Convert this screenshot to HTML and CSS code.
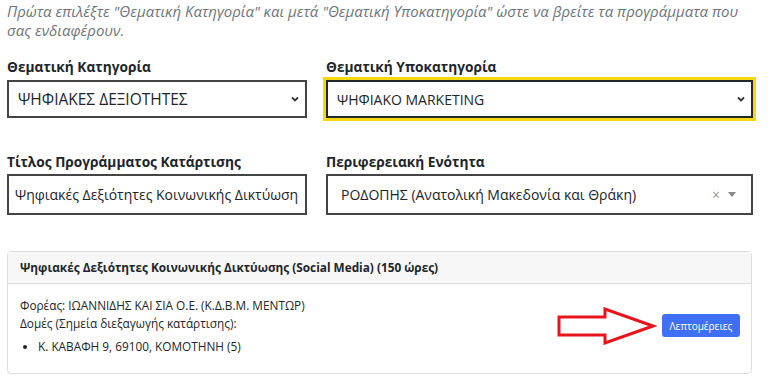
FILE: index.html
```html
<!DOCTYPE html>
<html lang="el">
<head>
  <meta charset="UTF-8">
  <title>Αναζήτηση Προγραμμάτων</title>
  <link rel="stylesheet" href="styles.css">
</head>
<body>

  <!-- Οδηγία -->
  <p class="odigia">Πρώτα επιλέξτε "Θεματική Κατηγορία" και μετά "Θεματική Υποκατηγορία" ώστε να βρείτε τα προγράμματα που σας ενδιαφέρουν.</p>

  <!-- Φίλτρα -->
  <div class="filtra">
    <div class="pedio">
      <label>Θεματική Κατηγορία</label>
      <div class="epilogi megali">
        <span>ΨΗΦΙΑΚΕΣ ΔΕΞΙΟΤΗΤΕΣ</span>
        <svg class="velaki" width="10" height="8" viewBox="0 0 10 8"><path d="M2 2.5 L5 5.5 L8 2.5" fill="none" stroke="#333" stroke-width="1.8"/></svg>
      </div>
    </div>
    <div class="pedio">
      <label>Θεματική Υποκατηγορία</label>
      <div class="epilogi energo">
        <span>ΨΗΦΙΑΚΟ MARKETING</span>
        <svg class="velaki" width="10" height="8" viewBox="0 0 10 8"><path d="M2 2.5 L5 5.5 L8 2.5" fill="none" stroke="#333" stroke-width="1.8"/></svg>
      </div>
    </div>
    <div class="pedio">
      <label>Τίτλος Προγράμματος Κατάρτισης</label>
      <div class="keimeno">
        <span>Ψηφιακές Δεξιότητες Κοινωνικής Δικτύωσης</span>
      </div>
    </div>
    <div class="pedio">
      <label>Περιφερειακή Ενότητα</label>
      <div class="keimeno perioxi">
        <span>ΡΟΔΟΠΗΣ (Ανατολική Μακεδονία και Θράκη)</span>
        <span class="katharismos">×</span>
        <span class="trigono"></span>
      </div>
    </div>
  </div>

  <!-- Αποτέλεσμα -->
  <div class="karta">
    <div class="karta-kefali">Ψηφιακές Δεξιότητες Κοινωνικής Δικτύωσης (Social Media) (150 ώρες)</div>
    <div class="karta-soma">
      <div class="stoixeia">
        <p>Φορέας: ΙΩΑΝΝΙΔΗΣ ΚΑΙ ΣΙΑ Ο.Ε. (Κ.Δ.Β.Μ. ΜΕΝΤΩΡ)</p>
        <p>Δομές (Σημεία διεξαγωγής κατάρτισης):</p>
        <ul>
          <li>Κ. ΚΑΒΑΦΗ 9, 69100, ΚΟΜΟΤΗΝΗ (5)</li>
        </ul>
      </div>
      <div class="energeies">
        <svg width="100" height="38" viewBox="0 0 100 38">
          <path d="M2 10 H48 V2 L96 19 L48 36 V28 H2 Z" fill="#fff" stroke="#e8161c" stroke-width="3"/>
        </svg>
        <button class="koumpi">Λεπτομέρειες</button>
      </div>
    </div>
  </div>

</body>
</html>
```

FILE: styles.css
```css
/* Σελίδα αναζήτησης */
body {
  font-family: "Open Sans", "Noto Sans", sans-serif;
  margin: 0;
  padding: 0 7px;
  color: #212529;
  background: #fff;
}

.odigia {
  margin: 2px 0 0;
  font-size: 15px;
  line-height: 19px;
  font-style: italic;
  color: #6c757d;
  padding-right: 20px;
}

.filtra {
  display: grid;
  grid-template-columns: 300px 427px;
  column-gap: 19px;
  row-gap: 34px;
  margin-top: 17px;
}

.pedio label {
  display: block;
  font-weight: 700;
  font-size: 13.7px;
  line-height: 20px;
  margin-bottom: 3px;
}

.epilogi,
.keimeno {
  display: flex;
  align-items: center;
  border: 2px solid #444;
  box-sizing: border-box;
  height: 38px;
  padding: 0 5px 0 9px;
  font-size: 14px;
  white-space: nowrap;
  overflow: hidden;
}

.epilogi span,
.keimeno span:first-child {
  flex: 1;
  overflow: hidden;
}

.megali {
  font-size: 15.5px;
}

.energo {
  outline: 3px solid #f5d90a;
  border-color: #25282b;
}

.velaki {
  flex: none;
}

.keimeno {
  height: 41px;
  margin-top: -1px;
  padding-left: 6px;
  padding-right: 6px;
}

.perioxi {
  padding-left: 13px;
  padding-right: 15px;
}

.katharismos {
  color: #999;
  font-size: 14px;
  margin-right: 8px;
}

.trigono {
  width: 0;
  height: 0;
  border-left: 4px solid transparent;
  border-right: 4px solid transparent;
  border-top: 5px solid #888;
}

.karta {
  margin-top: 36px;
  border: 1px solid #ddd;
  border-radius: 4px;
  width: 745px;
  box-sizing: border-box;
}

.karta-kefali {
  background: #f7f7f7;
  border-bottom: 1px solid #ddd;
  padding: 7px 12px;
  font-size: 11.8px;
  font-weight: 700;
  line-height: 17px;
}

.karta-soma {
  display: flex;
  justify-content: space-between;
  align-items: center;
  padding: 12px 11px 18px 12px;
  font-size: 11.8px;
}

.stoixeia p {
  margin: 0;
  line-height: 18px;
}

.stoixeia ul {
  margin: 5px 0 0;
  padding-left: 18px;
  line-height: 18px;
}

.energeies {
  display: flex;
  align-items: center;
  gap: 5px;
}

.koumpi {
  font-family: "Open Sans", sans-serif;
  background: #3f6ff5;
  color: #fff;
  border: none;
  border-radius: 3px;
  font-size: 10px;
  padding: 0 7px;
  width: 78px;
  height: 23px;
}
```
